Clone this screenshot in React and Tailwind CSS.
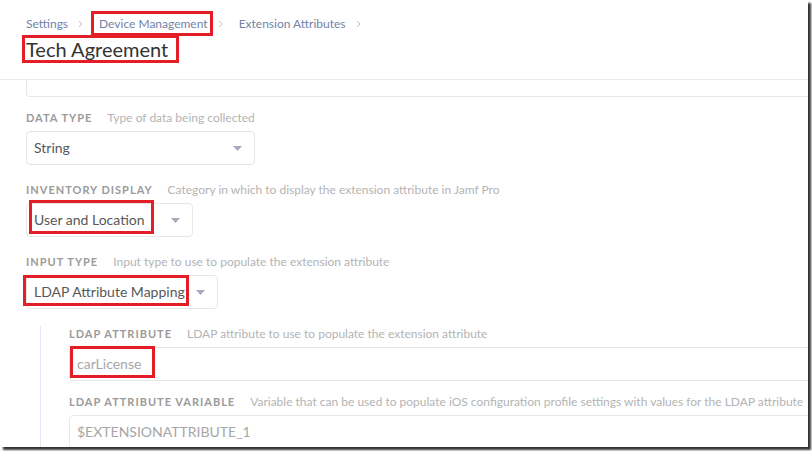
import React from "react";

const font = { fontFamily: "Lato, 'Open Sans', sans-serif" };

function Chevron() {
  return (
    <svg className="mx-[10px] h-[8px] w-[5px] text-[#b9bdc9]" viewBox="0 0 5 8" fill="none" stroke="currentColor" strokeWidth="1" aria-hidden>
      <path d="M1 1l3 3-3 3" />
    </svg>
  );
}

function Caret() {
  return (
    <svg className="h-[5px] w-[9px] text-[#a9a9bb]" viewBox="0 0 9 5" aria-hidden>
      <path d="M0 0h9L4.5 5z" fill="currentColor" />
    </svg>
  );
}

function Mark({ className }) {
  return <span className={`pointer-events-none absolute border-[3px] border-[#e41e26] ${className}`} />;
}

function FieldLabel({ name, hint }) {
  return (
    <div className="flex h-[16px] items-center whitespace-nowrap">
      <span className="text-[11px] font-bold uppercase tracking-[1px] text-[#9b9b9b]">{name}</span>
      <span className="ml-[15px] text-[12px] text-[#b4b4b4]">{hint}</span>
    </div>
  );
}

function SelectBox({ value, width, mark }) {
  return (
    <div className={`relative mt-[5px] flex h-[34px] items-center justify-between rounded-[4px] border border-[#e6e6e6] pl-[7px] pr-[12px] ${width}`}>
      <span className="pb-[2px] text-[14px] text-[#585858]">{value}</span>
      <Caret />
      {mark}
    </div>
  );
}

function TextBox({ value, mark }) {
  return (
    <div className="relative mt-[5px] flex h-[34px] w-[760px] items-center rounded-l-[4px] border border-[#e8e8e8] pl-[7px]">
      <span className="pb-[2px] text-[14px] text-[#a6a6a6]">{value}</span>
      {mark}
    </div>
  );
}

export default function App() {
  return (
    <div className="h-[451px] w-[812px] overflow-hidden bg-white" style={font}>
      <div className="h-[447px] w-[808px] overflow-hidden bg-white shadow-[3px_3px_2px_rgba(0,0,0,0.8)]">
        <header className="border-b border-[#e9e9e9] px-[26px] pb-[16px] pt-[16px]">
          <nav className="flex h-[16px] items-center text-[12px] text-[#7282a8]">
            <span>Settings</span>
            <Chevron />
            <span className="relative ml-[6px]">
              Device Management
              <Mark className="-bottom-[3px] -left-[8px] -right-[5px] -top-[4px]" />
            </span>
            <Chevron />
            <span className="ml-[6px]">Extension Attributes</span>
            <Chevron />
          </nav>
          <h1 className="relative mt-[4px] inline-block h-[26px] text-[20px] leading-[26px] text-[#333333]">
            Tech Agreement
            <Mark className="-bottom-[1px] -left-[4px] -right-[11px] -top-[1px]" />
          </h1>
        </header>

        <div className="ml-[26px] h-[17px] rounded-bl-[4px] border-b border-l border-[#e8e8e8]" />

        <main className="px-[26px]">
          <section className="mt-[13px]">
            <FieldLabel name="Data Type" hint="Type of data being collected" />
            <SelectBox value="String" width="w-[229px]" />
          </section>

          <section className="mt-[17px]">
            <FieldLabel name="Inventory Display" hint="Category in which to display the extension attribute in Jamf Pro" />
            <SelectBox
              value="User and Location"
              width="w-[167px]"
              mark={<Mark className="left-[2px] top-[-4px] h-[34px] w-[125px]" />}
            />
          </section>

          <section className="mt-[17px]">
            <FieldLabel name="Input Type" hint="Input type to use to populate the extension attribute" />
            <SelectBox
              value="LDAP Attribute Mapping"
              width="w-[192px]"
              mark={<Mark className="left-[-4px] top-[-1px] h-[31px] w-[166px]" />}
            />
          </section>

          <section className="ml-[14px] mt-[17px] border-l border-[#e6e6f4] pl-[28px] pb-[40px]">
            <FieldLabel name="LDAP Attribute" hint="LDAP attribute to use to populate the extension attribute" />
            <TextBox value="carLicense" mark={<Mark className="left-[0px] top-[-2px] h-[32px] w-[85px]" />} />

            <div className="mt-[13px]">
              <FieldLabel name="LDAP Attribute Variable" hint="Variable that can be used to populate iOS configuration profile settings with values for the LDAP attribute" />
              <TextBox value="$EXTENSIONATTRIBUTE_1" />
            </div>
          </section>
        </main>
      </div>
    </div>
  );
}
